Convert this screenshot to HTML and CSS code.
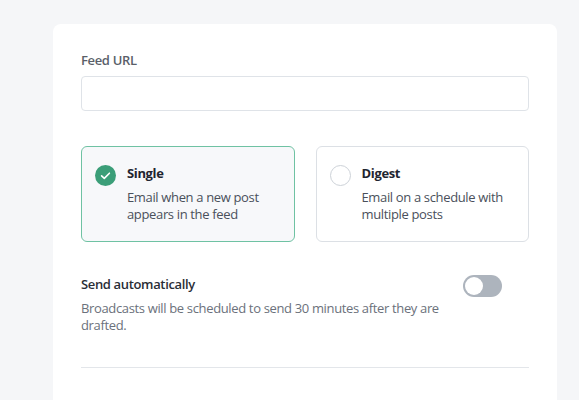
FILE: index.html
```html
<!DOCTYPE html>
<html lang="en">
<head>
<meta charset="utf-8">
<title>Feed settings</title>
<link rel="stylesheet" href="styles.css">
</head>
<body>
<main class="panel">
  <label class="field-label" for="feed-url">Feed URL</label>
  <input class="text-input" id="feed-url" type="text">

  <div class="options">
    <div class="option option-selected">
      <span class="check">
        <svg width="21" height="21" viewBox="0 0 21 21"><circle cx="10.5" cy="10.5" r="10.5" fill="#3b9e78"/><polyline points="6.6,10.8 9.3,13.4 14.4,8.2" fill="none" stroke="#fff" stroke-width="1.6" stroke-linecap="round" stroke-linejoin="round"/></svg>
      </span>
      <div class="option-text">
        <div class="option-title">Single</div>
        <div class="option-desc">Email when a new post appears in the feed</div>
      </div>
    </div>
    <div class="option">
      <span class="radio"></span>
      <div class="option-text">
        <div class="option-title">Digest</div>
        <div class="option-desc">Email on a schedule with multiple posts</div>
      </div>
    </div>
  </div>

  <div class="setting">
    <div class="setting-text">
      <div class="setting-title">Send automatically</div>
      <div class="setting-desc">Broadcasts will be scheduled to send 30 minutes after they are drafted.</div>
    </div>
    <span class="toggle"><span class="knob"></span></span>
  </div>

  <hr class="divider">

  <div class="setting-title next">Email template</div>
</main>
</body>
</html>
```

FILE: styles.css
```css
html, body {
  margin: 0;
  padding: 0;
  background: #f5f6f8;
  overflow: hidden;
}
body {
  font-family: "Open Sans", "Liberation Sans", sans-serif;
  font-size: 13px;
  letter-spacing: -0.35px;
  padding-top: 24px;
}
.panel {
  display: flex;
  flex-direction: column;
  margin-left: 53px;
  width: 504px;
  box-sizing: border-box;
  background: #fff;
  border-radius: 8px;
  padding: 27px 28px 60px 28px;
  min-height: 420px;
}
.field-label {
  font-weight: 600;
  color: #5a5f69;
  line-height: 18px;
}
.text-input {
  margin-top: 7px;
  height: 35px;
  box-sizing: border-box;
  border: 1px solid #dfe3e8;
  border-radius: 4px;
  padding: 0 10px;
  font: inherit;
  outline: none;
}
.options {
  display: grid;
  grid-template-columns: 1fr 1fr;
  gap: 21px;
  margin-top: 35px;
}
.option {
  display: flex;
  gap: 11px;
  border: 1px solid #dce0e5;
  border-radius: 6px;
  padding: 18px 14px 17px 13px;
  height: 96px;
  box-sizing: border-box;
}
.option-selected {
  border-color: #6fc2a3;
  background: #f7f8fa;
}
.check, .radio {
  flex: none;
  width: 21px;
  height: 21px;
}
.check svg { display: block; }
.radio {
  box-sizing: border-box;
  border: 1.5px solid #cdd2d8;
  border-radius: 50%;
  background: #fff;
}
.option-title {
  font-weight: 700;
  color: #1f2530;
  line-height: 17px;
}
.option-desc {
  margin-top: 7px;
  color: #4a505b;
  line-height: 17px;
}
.setting {
  display: flex;
  align-items: flex-start;
  justify-content: space-between;
  margin-top: 33px;
}
.setting-text {
  width: 362px;
}
.setting-title {
  font-weight: 600;
  color: #2a2e36;
  line-height: 18px;
}
.setting-desc {
  margin-top: 7px;
  color: #6b717b;
  line-height: 17px;
}
.toggle {
  flex: none;
  margin-right: 27px;
  width: 39px;
  height: 22px;
  border-radius: 11px;
  background: #adb4bd;
  display: flex;
  align-items: center;
  padding-left: 2px;
  box-sizing: border-box;
}
.knob {
  width: 18px;
  height: 18px;
  border-radius: 50%;
  background: #fff;
}
.divider {
  border: 0;
  border-top: 1px solid #e3e6ea;
  margin: 33px 0 0 0;
}
.next {
  margin-top: 28px;
}
```
